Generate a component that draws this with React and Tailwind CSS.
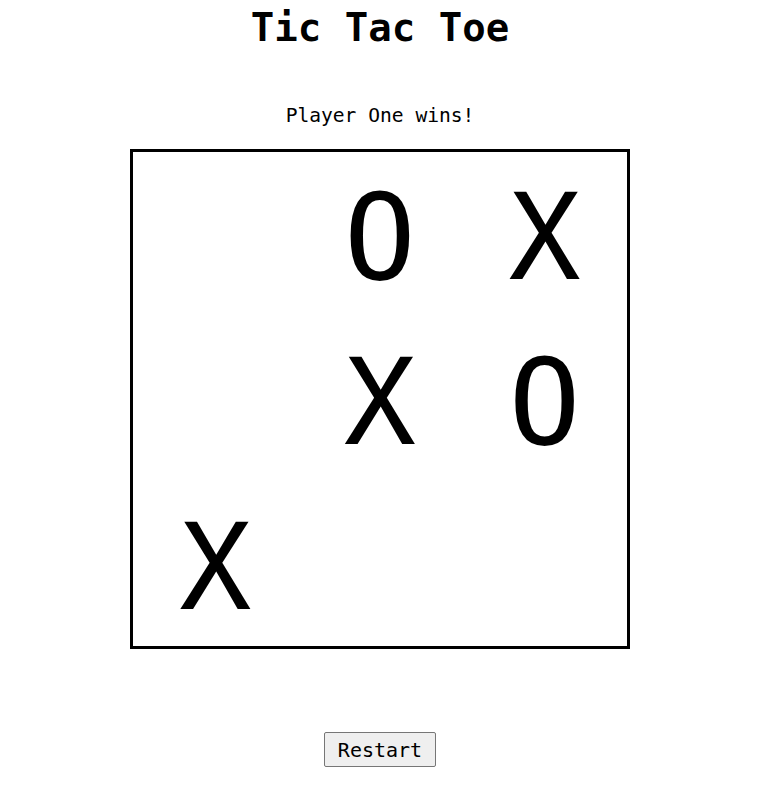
import React from "react";

const cells = ["", "O", "X", "", "X", "O", "X", "", ""];

export default function App() {
  return (
    <div className="w-[760px] min-h-[785px] bg-white flex flex-col items-center text-black" style={{ fontFamily: '"DejaVu Sans Mono", monospace' }}>
      <h1 className="mt-[4px] text-[39px] leading-[48px] font-bold">Tic Tac Toe</h1>
      <p className="mt-[52px] text-[19.6px] leading-[24px]">Player One wins!</p>
      <div className="mt-[21px] w-[500px] h-[500px] border-[3px] border-black grid grid-cols-3 grid-rows-3">
        {cells.map((c, i) => (
          <div key={i} className="flex items-center justify-center pt-[8px] text-[120px] leading-none">
            {c}
          </div>
        ))}
      </div>
      <button className="mt-[83px] w-[112px] h-[35px] bg-[#efefef] border border-[#767676] rounded-[2px] text-[20px] leading-[24px]">
        Restart
      </button>
    </div>
  );
}
